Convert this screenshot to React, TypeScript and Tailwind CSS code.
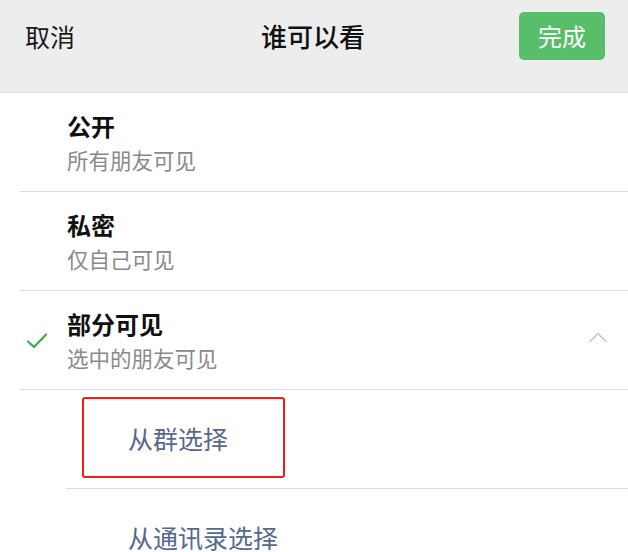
import React from "react";

const font = { fontFamily: '"Noto Sans CJK SC", "Noto Sans", sans-serif' };

function Option({
  title,
  sub,
  checked,
  chevron,
}: {
  title: string;
  sub: string;
  checked?: boolean;
  chevron?: boolean;
}) {
  return (
    <div className="relative flex h-[99px] items-center border-b border-[#dcdcdc] ml-[20px] pl-[47px] pr-[20px]">
      {checked && (
        <svg
          className="absolute left-[6px] top-[41px]"
          width="22"
          height="18"
          viewBox="0 0 22 18"
          fill="none"
        >
          <path d="M2 9.5 L8 15 L20 2.5" stroke="#3fad46" strokeWidth="2.2" strokeLinecap="round" strokeLinejoin="round" />
        </svg>
      )}
      <div className="flex flex-col">
        <div className="text-[24px] leading-[30px] font-bold text-[#111]">{title}</div>
        <div className="mt-[5px] text-[21.5px] leading-[28px] text-[#8a8a8a]">{sub}</div>
      </div>
      {chevron && (
        <svg className="ml-auto mt-[-6px]" width="20" height="12" viewBox="0 0 20 12" fill="none">
          <path d="M2 10.5 L10 2.5 L18 10.5" stroke="#c4c4c4" strokeWidth="1.6" strokeLinecap="round" strokeLinejoin="round" />
        </svg>
      )}
    </div>
  );
}

export default function App() {
  return (
    <div className="w-[628px] h-[552px] overflow-hidden bg-white" style={font}>
      <div className="flex h-[93px] items-center justify-between bg-[#ededed] border-b border-[#dedede] pl-[25px] pr-[23px]">
        <div className="text-[25px] leading-[30px] text-[#1a1a1a] mt-[-20px]">取消</div>
        <div className="text-[26px] leading-[30px] font-medium text-[#111] mt-[-20px] ml-[32px]">谁可以看</div>
        <div className="flex h-[48px] w-[86px] items-center justify-center rounded-[5px] bg-[#58be69] text-[24px] text-white mt-[-20px]">
          完成
        </div>
      </div>
      <Option title="公开" sub="所有朋友可见" />
      <Option title="私密" sub="仅自己可见" />
      <Option title="部分可见" sub="选中的朋友可见" checked chevron />
      <div className="ml-[66px] h-[99px] border-b border-[#dcdcdc] pt-[7px] pl-[16px]">
        <div className="flex h-[81px] w-[203px] items-center rounded-[3px] border-2 border-[#f01d1d] pl-[44px]">
          <span className="text-[25px] text-[#58688a] mt-[2px]">从群选择</span>
        </div>
      </div>
      <div className="ml-[128px] pt-[33px] text-[25px] leading-[30px] text-[#58688a]">从通讯录选择</div>
    </div>
  );
}
